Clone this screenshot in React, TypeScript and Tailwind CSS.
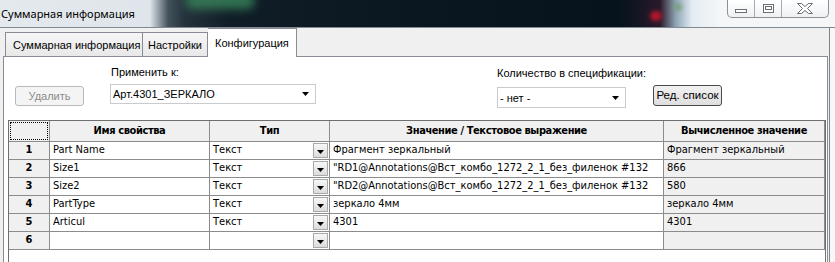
import React from "react";

const rows = [
  ["1", "Part Name", "Текст", "Фрагмент зеркальный", "Фрагмент зеркальный"],
  ["2", "Size1", "Текст", "\"RD1@Annotations@Вст_комбо_1272_2_1_без_филенок #132", "866"],
  ["3", "Size2", "Текст", "\"RD2@Annotations@Вст_комбо_1272_2_1_без_филенок #132", "580"],
  ["4", "PartType", "Текст", "зеркало 4мм", "зеркало 4мм"],
  ["5", "Articul", "Текст", "4301", "4301"],
  ["6", "", "", "", ""],
];

function Arrow() {
  return (
    <svg width="7" height="4" viewBox="0 0 7 4">
      <polygon points="0,0 7,0 3.5,4" fill="#000" />
    </svg>
  );
}

function WinButtons() {
  return (
    <div className="mr-[6px] flex h-[18px] overflow-hidden rounded-b-[5px] border border-t-0 border-[#8d9195] bg-[linear-gradient(#ffffff,#eef1f4)]">
      <div className="flex w-[27px] items-end justify-center border-r border-[#a8acb0] pb-[4px]">
        <svg width="12" height="4" viewBox="0 0 12 4">
          <rect x="0.5" y="0.5" width="11" height="3" fill="#fff" stroke="#6b6f73" />
        </svg>
      </div>
      <div className="flex w-[27px] items-center justify-center border-r border-[#a8acb0]">
        <svg width="11" height="9" viewBox="0 0 11 9">
          <rect x="0.5" y="0.5" width="10" height="8" fill="#fff" stroke="#6b6f73" />
          <rect x="2.5" y="2.5" width="6" height="3" fill="#fff" stroke="#6b6f73" />
        </svg>
      </div>
      <div className="flex w-[46px] items-center justify-center">
        <svg width="16" height="11" viewBox="0 0 16 11">
          <polygon
            points="0.5,0.5 4.5,0.5 8,3.5 11.5,0.5 15.5,0.5 10.5,5.5 15.5,10.5 11.5,10.5 8,7.5 4.5,10.5 0.5,10.5 5.5,5.5"
            fill="#fff"
            stroke="#6b6f73"
          />
        </svg>
      </div>
    </div>
  );
}

function TitleBar() {
  return (
    <div className="relative flex h-[28px] items-start justify-between overflow-hidden border-b border-[#7f8a93] bg-[linear-gradient(90deg,#e4e9ee_0px,#dfe5ea_150px,#44525c_168px,#24323c_185px,#101d27_230px,#0a1721_420px,#06131d_620px,#1c1626_645px,#2a1a2a_660px,#8fa6b6_676px,#e4ecf2_692px,#f4f6f8_720px,#f4f6f8_835px)]">
      <div className="absolute left-[185px] top-[-7px] h-[16px] w-[70px] rounded-full bg-[#3a8a5c] opacity-80 blur-[5px]" />
      <div className="absolute left-[650px] top-[11px] h-[10px] w-[12px] rounded-full bg-[#b0182c] blur-[2px]" />
      <div className="absolute left-[674px] top-[3px] h-[8px] w-[8px] rounded-full bg-[#6b9a62] opacity-70 blur-[2px]" />
      <span className="relative pl-[1px] pt-[6px] font-['Noto_Sans',sans-serif] text-[11px] leading-[16px] text-black">
        Суммарная информация
      </span>
      <WinButtons />
    </div>
  );
}

function Combo({ text, w, h }: { text: string; w: string; h: string }) {
  return (
    <div className={`flex items-center justify-between border border-[#c9cbce] bg-white pl-[2px] pr-[6px] ${w} ${h}`}>
      <span className="whitespace-nowrap text-[11px] leading-[14px] text-black">{text}</span>
      <Arrow />
    </div>
  );
}

export default function App() {
  return (
    <div className="h-[262px] w-[835px] overflow-hidden bg-[#f6f7f8] font-['Liberation_Sans',Arial,sans-serif]">
      <TitleBar />
      <div className="flex h-[234px] w-[830px] flex-col border-r border-[#80858a] bg-[#f0f0f0]">
        {/* tabs */}
        <div className="flex h-[28px] items-end pl-[5px]">
          <div className="flex h-[24px] w-[138px] items-center whitespace-nowrap border border-b-0 border-[#898c95] bg-[linear-gradient(#f6f6f6,#e8e8e8)] pl-[7px] pt-[2px] text-[11px] text-black">
            Суммарная информация
          </div>
          <div className="flex h-[24px] w-[65px] items-center whitespace-nowrap border border-b-0 border-l-0 border-[#898c95] bg-[linear-gradient(#f6f6f6,#e8e8e8)] pl-[5px] pt-[2px] text-[11px] text-black">
            Настройки
          </div>
          <div className="relative z-10 mb-[-1px] flex h-[29px] w-[89px] items-center whitespace-nowrap border border-b-0 border-l-0 border-[#898c95] bg-white pl-[7px] text-[11px] text-black">
            Конфигурация
          </div>
        </div>
        {/* panel */}
        <div className="ml-[3px] flex w-[825px] flex-1 flex-col border border-b-0 border-[#898c95] bg-white">
          <div className="flex h-[63px] items-start">
            <div className="ml-[11px] mt-[29px] flex h-[20px] w-[69px] items-center justify-center rounded-[3px] border border-[#b5b9bd] bg-[#f4f4f4] text-[11px] text-[#8a8a8a]">
              Удалить
            </div>
            <div className="ml-[26px] flex w-[206px] flex-col">
              <span className="mt-[8px] h-[14px] whitespace-nowrap pl-[1px] text-[11px] leading-[14px] text-black">Применить к:</span>
              <div className="mt-[5px]">
                <Combo text="Арт.4301_ЗЕРКАЛО" w="w-[206px]" h="h-[20px]" />
              </div>
            </div>
            <div className="ml-[181px] flex w-[129px] flex-col">
              <span className="mt-[9px] h-[14px] whitespace-nowrap text-[11px] leading-[14px] text-black">Количество в спецификации:</span>
              <div className="mt-[7px]">
                <Combo text="- нет -" w="w-[129px]" h="h-[21px]" />
              </div>
            </div>
            <div className="ml-[27px] mt-[28px] flex h-[21px] w-[69px] items-center justify-center whitespace-nowrap rounded-[3px] border border-[#4a4a4a] bg-[linear-gradient(#f2f2f2,#dedede)] text-[11.5px] text-black">
              Ред. список
            </div>
          </div>
          {/* grid */}
          <div className="ml-[4px] w-[818px] flex-1 border border-b-0 border-[#6f6f6f] bg-white font-['DejaVu_Sans_Condensed','DejaVu_Sans',sans-serif] text-[11px] text-black">
            <div className="grid h-[21px] grid-cols-[41px_160px_120px_334px_161px] font-bold tracking-[-0.4px]">
              <div className="border-b border-r border-[#8c8c8c] bg-[#f0f0f0] p-[1px]">
                <div className="h-full w-full border border-dotted border-black" />
              </div>
              <div className="flex items-center justify-center border-b border-r border-[#8c8c8c] bg-[#f0f0f0]">Имя свойства</div>
              <div className="flex items-center justify-center border-b border-r border-[#8c8c8c] bg-[#f0f0f0]">Тип</div>
              <div className="flex items-center justify-center border-b border-r border-[#8c8c8c] bg-[#f0f0f0]">Значение / Текстовое выражение</div>
              <div className="flex items-center justify-center border-b border-r border-[#8c8c8c] bg-[#f0f0f0]">Вычисленное значение</div>
            </div>
            {rows.map((r) => (
              <div key={r[0]} className="grid h-[18px] grid-cols-[41px_160px_120px_334px_161px]">
                <div className="flex items-center justify-center border-b border-r border-[#8c8c8c] bg-[#f0f0f0] font-bold">{r[0]}</div>
                <div className="flex items-center overflow-hidden whitespace-nowrap border-b border-r border-[#8c8c8c] pl-[3px]">{r[1]}</div>
                <div className="flex items-center justify-between border-b border-r border-[#8c8c8c] pl-[3px] pr-[1px]">
                  <span>{r[2]}</span>
                  <div className="flex h-[15px] w-[15px] items-center justify-center border border-[#a9a9a9] bg-[linear-gradient(#f7f7f7,#dcdcdc)] pt-[2px]">
                    <Arrow />
                  </div>
                </div>
                <div className="flex items-center overflow-hidden whitespace-nowrap border-b border-r border-[#8c8c8c] pl-[3px]">{r[3]}</div>
                <div className="flex items-center overflow-hidden whitespace-nowrap border-b border-r border-[#8c8c8c] bg-[#f0f0f0] pl-[3px]">{r[4]}</div>
              </div>
            ))}
          </div>
        </div>
      </div>
    </div>
  );
}
